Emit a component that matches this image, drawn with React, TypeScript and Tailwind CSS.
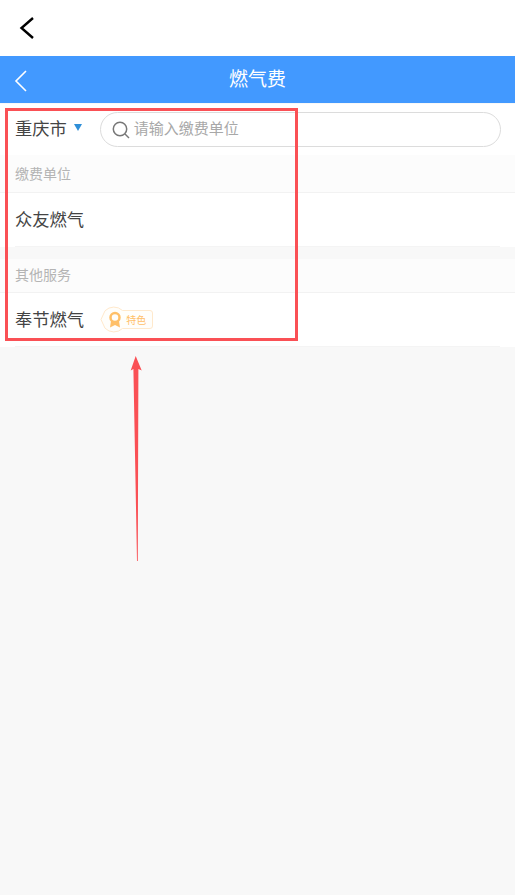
const FONT = "font-['Noto_Sans_CJK_SC','Noto_Sans',sans-serif]";

function BadgeIcon() {
  return (
    <svg width="54" height="27" viewBox="0 0 54 27" fill="none" className="ml-[16px]">
      <path d="M22.500 4.500H50a2.500 2.500 0 0 1 2.500 2.500V20a2.500 2.500 0 0 1-2.500 2.500H22.500A12.500 12.500 0 0 1 5 22.200L1 13.500 5 4.800A12.500 12.500 0 0 1 22.500 4.500Z" stroke="#ffe9cc" strokeWidth="1" fill="#fffefb" />
      <path d="M11 15 10 21.500 15 19 20 21.500 19 15" fill="#ffc069" />
      <circle cx="15" cy="11.500" r="4.500" stroke="#ffc069" strokeWidth="2.500" fill="#fffefb" />
    </svg>
  );
}

export default function App() {
  return (
    <div className={`relative flex h-[895px] w-[515px] flex-col overflow-hidden bg-[#f8f8f8] ${FONT}`}>
      <div className="flex h-[56px] items-center bg-white pl-[19px] pb-[1px]">
        <svg width="16" height="24" viewBox="0 0 16 24" fill="none">
          <path d="M14 2 2.500 12 14 22" stroke="#000" strokeWidth="2.400" />
        </svg>
      </div>

      <div className="relative flex h-[47px] items-center justify-center bg-[#4299ff] text-[19px] text-white">
        <svg width="14" height="24" viewBox="0 0 14 24" fill="none" className="absolute left-[14px] top-[13px]">
          <path d="M12 2 2 12l10 10" stroke="#fff" strokeWidth="1.600" />
        </svg>
        <span className="pb-[3px]">燃气费</span>
      </div>

      <div className="mt-[1px] flex h-[51px] items-center bg-white pl-[15px]">
        <span className="pb-[3px] text-[17.300px] text-[#444]">重庆市</span>
        <span className="mb-[4px] ml-[7px] h-0 w-0 border-x-[4.500px] border-t-[7px] border-x-transparent border-t-[#2f8fd8]" />
        <div className="ml-[18px] flex h-[35px] w-[401px] items-center rounded-full border border-[#dcdcdc] pl-[10px]">
          <svg width="20" height="20" viewBox="0 0 20 20" fill="none">
            <circle cx="9" cy="9" r="6.700" stroke="#777" strokeWidth="1.500" />
            <path d="m14 14 4 4" stroke="#777" strokeWidth="1.500" />
          </svg>
          <span className="ml-[3px] pb-[2px] text-[15px] text-[#a8a8a8]">请输入缴费单位</span>
        </div>
      </div>

      <div className="h-[38px] border-b border-[#f2f2f2] bg-[#fcfcfc] pl-[15px] text-[14px] leading-[37px] text-[#b4b4b4]">缴费单位</div>
      <div className="h-[54px] bg-white">
        <div className="mx-[15px] flex h-[54px] items-center border-b border-[#f4f4f4] pb-[2px] text-[17.300px] text-[#444]">众友燃气</div>
      </div>

      <div className="mt-[12px] h-[34px] border-b border-[#f2f2f2] bg-[#fcfcfc] pl-[15px] text-[14px] leading-[31px] text-[#b4b4b4]">其他服务</div>
      <div className="h-[54px] bg-white">
        <div className="mx-[15px] flex h-[54px] items-center border-b border-[#f4f4f4] text-[17.300px] text-[#444]">
          <span className="pb-[2px]">奉节燃气</span>
          <div className="relative flex">
            <BadgeIcon />
            <span className="absolute left-[42px] top-[5px] text-[10px] leading-[18px] text-[#ffc069]">特色</span>
          </div>
        </div>
      </div>

      <div className="pointer-events-none absolute left-[5px] top-[108px] h-[233px] w-[293px] border-[3px] border-[#fa5055]" />
      <svg width="20" height="210" viewBox="0 0 20 210" fill="none" className="pointer-events-none absolute left-[127px] top-[355px]">
        <path d="M8.700 1 14.700 15.500 11.400 14 10.800 206H10L6.400 14 3.700 15.500Z" fill="#fa5055" />
      </svg>
    </div>
  );
}
